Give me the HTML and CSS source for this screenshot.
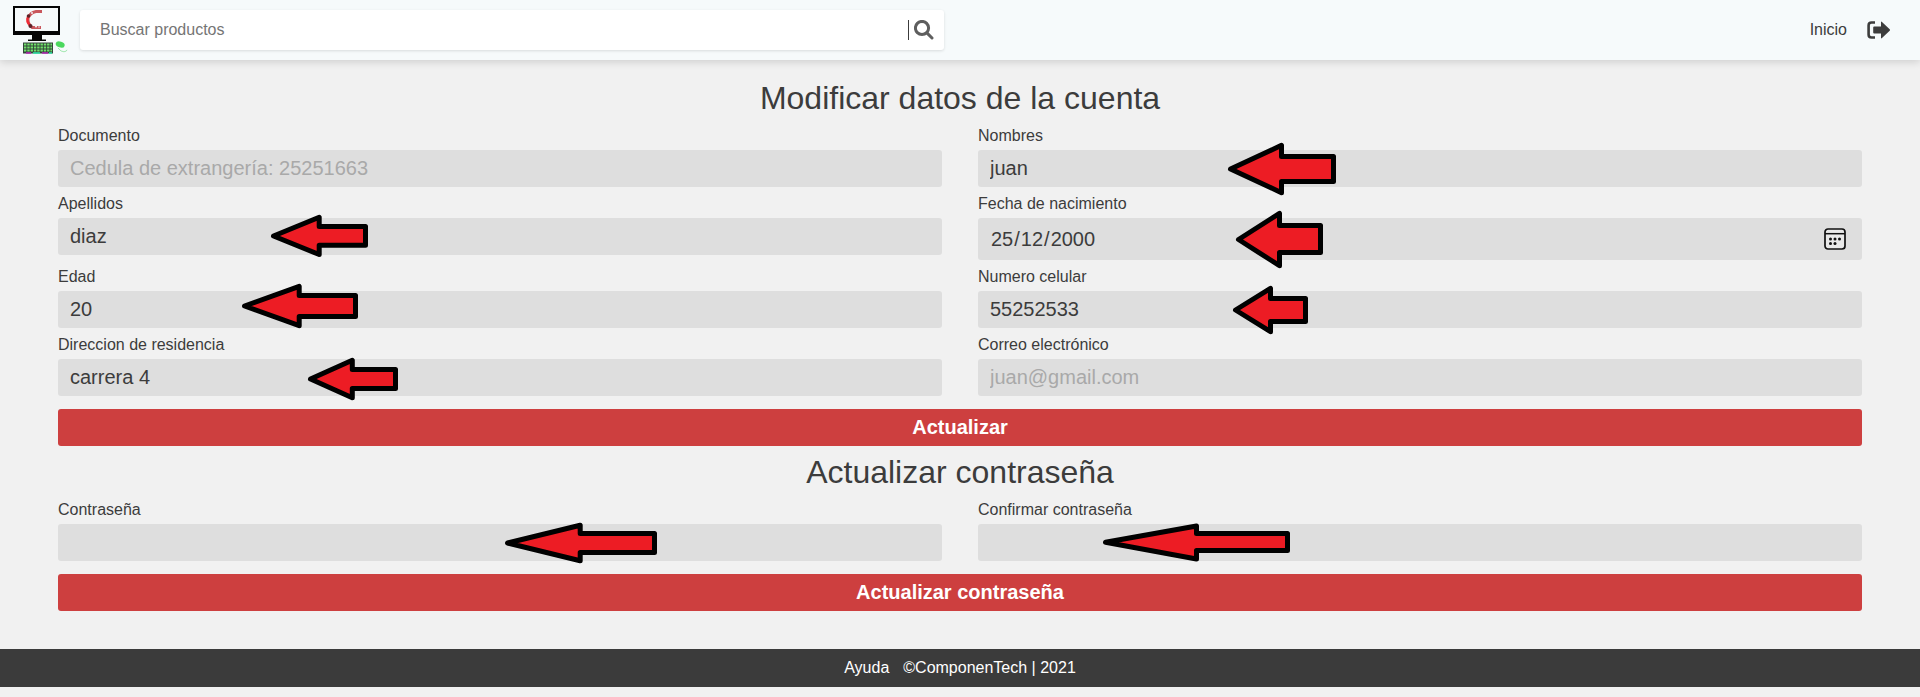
FILE: index.html
```html
<!DOCTYPE html>
<html lang="es">
<head>
<meta charset="utf-8">
<title>ComponenTech</title>
<link rel="stylesheet" href="styles.css">
</head>
<body>
<header class="topbar">
  <a class="logo" href="#">
    <svg width="60" height="52" viewBox="0 0 60 52">
      <path d="M5 2h47v29H5z" fill="#050505"/>
      <path d="M7 4h43v23H7z" fill="#f5f9fa"/>
      <path d="M24 31h10v4.500h4v1.500H20v-1.500h4z" fill="#050505"/>
      <path d="M34 7.500h-6q-6 1-8 7 0 6 4 9h9" fill="none" stroke="#c9565b" stroke-width="2.800"/>
      <path d="M20 13q-2 5 2 8" fill="none" stroke="#ef2b35" stroke-width="2.400"/>
      <g fill="#5c2228"><circle cx="20.500" cy="12" r="1.800"/><circle cx="22.500" cy="22" r="2"/></g>
      <g fill="#eee"><circle cx="24" cy="9" r="1"/><circle cx="28" cy="22.500" r="1.100"/><circle cx="31" cy="23" r=".8"/></g>
      <path d="M15 38.500h30v11H15z" fill="#33453a"/>
      <path d="M16 40.500h28M16 43.500h28M16 46.500h28" fill="none" stroke="#6fe06a" stroke-width="1.800" stroke-dasharray="2.400 .9"/>
      <path d="M18 49h5M34 49h6" stroke="#b629b8" stroke-width="1.500"/>
      <path d="M25 49h7M41 49h3" stroke="#2cebac" stroke-width="1.500"/>
      <ellipse cx="52.200" cy="40.500" rx="4.600" ry="3" transform="rotate(18 52.200 40.500)" fill="#4bd85e"/>
      <path d="M50 44q3 4 6 3.800 3-.5 3-2" fill="none" stroke="#a3e8b0" stroke-width="1"/>
    </svg>
  </a>
  <form class="search">
    <input class="search-input" type="text" placeholder="Buscar productos">
    <span class="search-divider"></span>
    <svg class="search-icon" width="20" height="20" viewBox="0 0 20 20"><circle cx="8" cy="8" r="6.600"/><path d="M12.900 12.900l5.100 5.100"/></svg>
  </form>
  <nav class="nav">
    <a href="#">Inicio</a>
    <svg width="24" height="18" viewBox="0 0 24 18"><path d="M8 1.500H4.500Q1.600 1.500 1.600 4.500v9Q1.600 16.500 4.500 16.500H8" fill="none" stroke="#3c3c3c" stroke-width="2.600"/><path d="M7.200 5.500h6.800V1.300q0-1.200 1-.4l7.700 7.400q.7.700 0 1.400L15 17.100q-1 .8-1-.4v-4.200H7.200q-1 0-1-1v-5q0-1 1-1z" fill="#3c3c3c"/></svg>
  </nav>
</header>
<main class="content">
  <h1 class="title">Modificar datos de la cuenta</h1>
  <form>
    <div class="fields">
      <label class="field">Documento<input value="Cedula de extrangería: 25251663" disabled></label>
      <label class="field">Nombres<input value="juan"></label>
      <label class="field">Apellidos<input value="diaz"></label>
      <div class="field">Fecha de nacimiento
        <div class="date">
          <div class="date-parts"><span>25</span>/<span>12</span>/<span>2000</span></div>
          <svg width="22" height="22" viewBox="0 0 22 22"><rect x="1" y="1" width="20" height="20" rx="3" fill="#e9e9e9" stroke="#111" stroke-width="1.700"/><path d="M1 5.700h20" stroke="#111" stroke-width="1.500"/><g fill="#111"><circle cx="6.500" cy="11" r="1.500"/><circle cx="11" cy="11" r="1.500"/><circle cx="15.500" cy="11" r="1.500"/><circle cx="6.500" cy="15.400" r="1.500"/><circle cx="11" cy="15.400" r="1.500"/></g></svg>
        </div>
      </div>
      <label class="field">Edad<input value="20"></label>
      <label class="field">Numero celular<input value="55252533"></label>
      <label class="field">Direccion de residencia<input value="carrera 4"></label>
      <label class="field">Correo electrónico<input value="juan@gmail.com" disabled></label>
    </div>
    <button class="submit" type="button">Actualizar</button>
  </form>
  <h1 class="title">Actualizar contraseña</h1>
  <form>
    <div class="fields">
      <label class="field">Contraseña<input type="password"></label>
      <label class="field">Confirmar contraseña<input type="password"></label>
    </div>
    <button class="submit" type="button">Actualizar contraseña</button>
  </form>
</main>
<footer class="footer"><a href="#">Ayuda</a><span>©ComponenTech | 2021</span></footer>
<svg class="arrows" width="1920" height="697" viewBox="0 0 1920 697">
  <path d="M273.500 236L319.200 217.300V226.500H365.500V245.200H319.200V254.500Z"/>
  <path d="M244.500 306L299.200 286.300V295.500H355.500V316.500H299.200V325.700Z"/>
  <path d="M310.500 379L352.300 360.300V369.500H395.500V388.500H352.300V397.700Z"/>
  <path d="M1230.500 169L1281.500 145.300V156.500H1333.500V181.500H1281.500V192.700Z"/>
  <path d="M1238.500 239.500L1279.500 213.300V225.500H1320.500V252.500H1279.500V265.700Z"/>
  <path d="M1235.500 310L1270.500 288.300V298.500H1305.500V321.500H1270.500V331.700Z"/>
  <path d="M507.500 543L580.200 525.200V533.500H654.500V552.500H580.200V560.700Z"/>
  <path d="M1105.500 542.300L1196.500 526V533.500H1287.500V550.500H1196.500V559Z"/>
</svg>
</body>
</html>
```
FILE: styles.css
```css
* {
  box-sizing: border-box;
}

body {
  margin: 0;
  min-height: 697px;
  background: #f1f1f1;
  color: #3c3c3c;
  font-family: "Liberation Sans", Arial, sans-serif;
  font-size: 16px;
  line-height: 18px;
}

a {
  color: inherit;
  text-decoration: none;
}

.topbar {
  display: flex;
  align-items: center;
  height: 60px;
  padding: 0 29px 0 8px;
  background: #f6fafb;
  box-shadow: 0 2px 8px rgba(0, 0, 0, 0.15);
}

.logo {
  width: 72px;
  height: 52px;
}

.search {
  display: flex;
  align-items: center;
  width: 864px;
  height: 40px;
  padding: 0 10px 0 20px;
  border-radius: 3px;
  background: #fff;
  box-shadow: 0 1px 3px rgba(0, 0, 0, 0.12);
}

.search-input {
  flex: 1;
  padding: 0;
  border: 0;
  background: none;
  font: inherit;
}

.search-input::placeholder {
  color: #757575;
}

.search-divider {
  width: 1px;
  height: 20px;
  margin-right: 5px;
  background: #3c3c3c;
}

.search-icon {
  fill: none;
  stroke: #5e5e5e;
  stroke-width: 3;
  stroke-linecap: round;
}

.nav {
  display: flex;
  align-items: center;
  gap: 20px;
  margin-left: auto;
}

.content {
  padding: 20px 58px 38px;
}

.title {
  margin: 0 0 10px;
  font-size: 32px;
  font-weight: 400;
  line-height: 37px;
  text-align: center;
}

.fields {
  display: grid;
  grid-template-columns: 1fr 1fr;
  gap: 8px 36px;
}

.field {
  display: flex;
  flex-direction: column;
  gap: 5px;
}

.field input,
.date {
  width: 100%;
  height: 37px;
  padding: 0 11px 0 12px;
  border: 0;
  border-radius: 3px;
  background: #dedede;
  color: #3c3c3c;
  font: 20px "Liberation Sans", Arial, sans-serif;
}

.field input:disabled {
  color: #a9a9a9;
}

.date {
  display: flex;
  align-items: center;
  justify-content: space-between;
  height: 42px;
  padding-right: 16px;
}

.date-parts span {
  padding: 0 1px;
}

.submit {
  display: block;
  width: 100%;
  height: 37px;
  margin: 13px 0 8px;
  padding: 0;
  border: 0;
  border-radius: 3px;
  background: #cd3f3f;
  color: #fff;
  font: bold 20px "Liberation Sans", Arial, sans-serif;
}

.content form:last-child .submit {
  margin-bottom: 0;
}

.footer {
  display: flex;
  justify-content: center;
  align-items: center;
  gap: 14px;
  height: 38px;
  background: #3b3b3b;
  color: #fff;
}

.arrows {
  position: absolute;
  top: 0;
  left: 0;
  fill: #ed1c24;
  stroke: #000;
  stroke-width: 5;
  stroke-linejoin: round;
  pointer-events: none;
}
```
